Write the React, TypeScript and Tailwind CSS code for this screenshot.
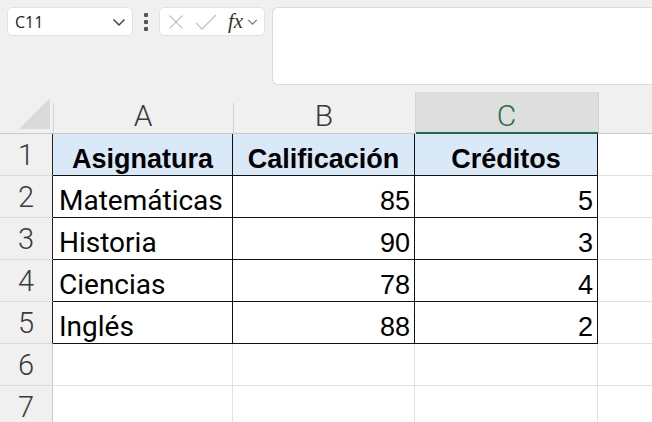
import React from "react";

const rows = [
  ["Matemáticas", "85", "5"],
  ["Historia", "90", "3"],
  ["Ciencias", "78", "4"],
  ["Inglés", "88", "2"],
];

const hdrFont = { fontFamily: "Roboto, 'Noto Sans', sans-serif" };

function RowHead({ n, dark }: { n: number; dark?: boolean }) {
  return (
    <div
      className={`h-[42px] flex items-end justify-center pb-[2px] leading-[36px] border-b border-[#dcdcdc] bg-[#f0f0f0] text-[29px] font-light text-[#3a3a3a] border-r ${
        dark ? "border-r-[#222]" : "border-r-[#c8c8c8]"
      }`}
      style={hdrFont}
    >
      {n}
    </div>
  );
}

export default function App() {
  return (
    <div className="w-[652px] h-[422px] overflow-hidden bg-[#f0f0f0] flex flex-col">
      {/* Toolbar */}
      <div className="h-[92px] flex items-start pt-[7px] pl-[7px] gap-0 shrink-0">
        <div
          className="w-[126px] h-[29px] bg-white rounded-[5px] border border-[#e2e2e2] flex items-center justify-between pl-[7px] pr-[5px]"
          style={{ fontFamily: "'Open Sans', 'Noto Sans', sans-serif" }}
        >
          <span className="text-[16px] text-[#222]">C11</span>
          <svg width="16" height="16" viewBox="0 0 16 16" fill="none" stroke="#444" strokeWidth="1.5">
            <path d="M2.5 5.5l5.5 5.5 5.5-5.5" />
          </svg>
        </div>
        <div className="w-[26px] h-[29px] flex flex-col items-center justify-center gap-[3px]">
          <div className="w-[4px] h-[4px] bg-[#555] rounded-[1px]" />
          <div className="w-[4px] h-[4px] bg-[#555] rounded-[1px]" />
          <div className="w-[4px] h-[4px] bg-[#555] rounded-[1px]" />
        </div>
        <div className="w-[106px] h-[29px] bg-white rounded-[5px] border border-[#e2e2e2] flex items-center pl-[8px]">
          <svg width="16" height="16" viewBox="0 0 16 16" fill="none" stroke="#c4c4c4" strokeWidth="1.3">
            <path d="M1.5 1.5l13 13M14.5 1.5l-13 13" />
          </svg>
          <svg className="ml-[11px]" width="22" height="16" viewBox="0 0 22 16" fill="none" stroke="#c4c4c4" strokeWidth="1.3">
            <path d="M1 9l6 6L21 1" />
          </svg>
          <span
            className="ml-[11px] text-[21px] italic text-[#333] leading-none"
            style={{ fontFamily: "'Liberation Serif', 'DejaVu Serif', serif" }}
          >
            fx
          </span>
          <svg className="ml-[3px]" width="13" height="13" viewBox="0 0 12 12" fill="none" stroke="#777" strokeWidth="1.1">
            <path d="M2 4.5l4 4 4-4" />
          </svg>
        </div>
        <div className="ml-[7px] flex-1 h-[78px] bg-white rounded-l-[6px] border border-r-0 border-[#dcdcdc]" />
      </div>

      {/* Grid */}
      <div className="grid grid-cols-[53px_180px_182px_183px_1fr] bg-white">
        {/* header row */}
        <div className="h-[42px] bg-[#f0f0f0] border-b border-[#c8c8c8] relative">
          <svg className="absolute left-0 top-0" width="53" height="42" viewBox="0 0 53 42">
            <polygon points="50,6 50,37 19,37" fill="#dadada" />
          </svg>
        </div>
        {["A", "B"].map((l) => (
          <div
            key={l}
            className="h-[42px] bg-[#f0f0f0] border-b border-[#c8c8c8] flex items-end justify-center pb-[0px] leading-[34px] text-[30px] font-light text-[#3a3a3a] relative"
            style={hdrFont}
          >
            <div className="absolute left-0 top-[11px] bottom-0 w-px bg-[#d2d2d2]" />
            {l}
          </div>
        ))}
        <div
          className="h-[42px] bg-[#dedede] border-b-2 border-[#1e6b43] flex items-end justify-center pb-[0px] leading-[33px] text-[30px] font-light text-[#1e7145] relative"
          style={hdrFont}
        >
          <div className="absolute left-0 top-0 bottom-[-2px] w-px bg-[#d2d2d2]" />
          C
        </div>
        <div className="h-[42px] bg-[#f0f0f0] border-b border-[#c8c8c8] relative">
          <div className="absolute left-0 top-0 bottom-0 w-px bg-[#d2d2d2]" />
        </div>

        {/* row 1 */}
        <RowHead n={1} dark />
        {["Asignatura", "Calificación", "Créditos"].map((t) => (
          <div
            key={t}
            className="h-[42px] bg-[#dae9f8] border-r border-b border-[#111] flex items-end justify-center pb-[3px] leading-[26px] text-[27px] font-bold text-black"
            style={{ fontFamily: "'Liberation Sans', Arial, sans-serif" }}
          >
            {t}
          </div>
        ))}
        <div className="h-[42px] border-b border-[#e1e1e1]" />

        {/* data rows */}
        {rows.map((r, i) => (
          <React.Fragment key={r[0]}>
            <RowHead n={i + 2} dark />
            <div
              className="h-[42px] border-r border-b border-[#111] flex items-end pl-[6px] pb-[3px] leading-[26px] text-[28px] text-black"
              style={{ fontFamily: "Roboto, 'Noto Sans', sans-serif" }}
            >
              {r[0]}
            </div>
            <div
              className="h-[42px] border-r border-b border-[#111] flex items-end justify-end pr-[4px] pb-[3px] leading-[26px] text-[27px] text-black"
              style={{ fontFamily: "'Liberation Sans', Arial, sans-serif" }}
            >
              {r[1]}
            </div>
            <div
              className="h-[42px] border-r border-b border-[#111] flex items-end justify-end pr-[4px] pb-[3px] leading-[26px] text-[27px] text-black"
              style={{ fontFamily: "'Liberation Sans', Arial, sans-serif" }}
            >
              {r[2]}
            </div>
            <div className="h-[42px] border-b border-[#e1e1e1]" />
          </React.Fragment>
        ))}

        {/* empty rows */}
        {[6, 7].map((n) => (
          <React.Fragment key={n}>
            <RowHead n={n} />
            <div className="h-[42px] border-r border-b border-[#e1e1e1]" />
            <div className="h-[42px] border-r border-b border-[#e1e1e1]" />
            <div className="h-[42px] border-r border-b border-[#e1e1e1]" />
            <div className="h-[42px] border-b border-[#e1e1e1]" />
          </React.Fragment>
        ))}
      </div>
    </div>
  );
}
